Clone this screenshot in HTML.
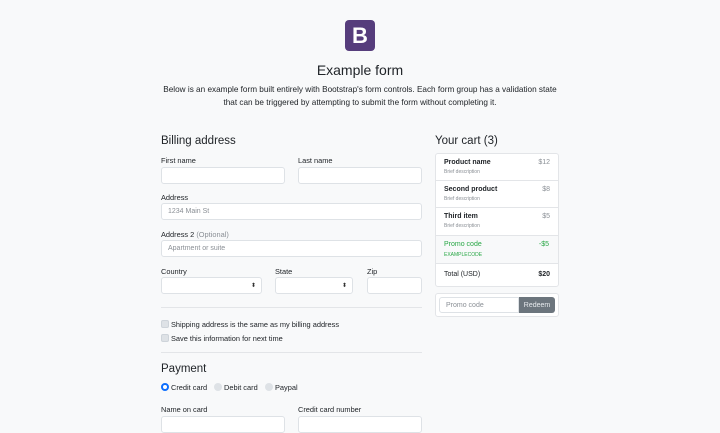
<!DOCTYPE html>
<html><head><style>
*{box-sizing:border-box;margin:0;padding:0}
body{width:720px;height:422px;overflow:hidden;background:#f8f9fa;font-family:"Liberation Sans",Arial,sans-serif;color:#212529;position:relative}
.a{position:absolute}
.lbl{position:absolute;font-size:7.4px;color:#212529;margin-top:2px}
.in{position:absolute;background:#fff;border:1px solid #dee2e6;border-radius:3px;height:17px;font-size:7px;color:#8a8f95;padding:4px 0 0 6px}
.sel::after{content:"⬍";position:absolute;right:5px;top:4px;font-size:6px;color:#333}
.hr{position:absolute;height:1px;background:#e3e5e8;left:161px;width:261px}
.cb{position:absolute;width:8px;height:8px;border-radius:2px;background:#dee2e6;border:1px solid #ced4da}
.rd{position:absolute;width:8px;height:8px;border-radius:50%;background:#dee2e6}
.row{position:absolute;left:435px;width:124px;border-bottom:1px solid #e3e5e8;font-size:7px}
.row b{position:absolute;left:9px;top:5px;font-weight:600;color:#212529}
.row i{position:absolute;left:9px;top:15px;font-style:normal;font-size:5px;color:#8a8f95}
.row s{position:absolute;right:9px;top:5px;text-decoration:none;color:#8a8f95}
.h{position:absolute;font-size:11.5px}
</style></head><body>
<div class="a" style="left:345px;top:20px;width:30px;height:31px;background:#563d7c;border-radius:4px;color:#fff;font-weight:bold;font-size:22px;text-align:center;line-height:31px">B</div>
<div class="a" style="left:0;width:720px;top:62px;text-align:center;font-size:14px">Example form</div>
<div class="a" style="left:160px;width:400px;top:83px;text-align:center;font-size:8.2px;line-height:13px;color:#212529">Below is an example form built entirely with Bootstrap's form controls. Each form group has a validation state that can be triggered by attempting to submit the form without completing it.</div>

<div class="h" style="left:161px;top:135px">Billing address</div>
<div class="lbl" style="left:161px;top:154px">First name</div>
<div class="lbl" style="left:298px;top:154px">Last name</div>
<div class="in" style="left:161px;top:167px;width:124px"></div>
<div class="in" style="left:298px;top:167px;width:124px"></div>
<div class="lbl" style="left:161px;top:191px">Address</div>
<div class="in" style="left:161px;top:203px;width:261px">1234 Main St</div>
<div class="lbl" style="left:161px;top:228px">Address 2 <span style="color:#8a8f95">(Optional)</span></div>
<div class="in" style="left:161px;top:240px;width:261px">Apartment or suite</div>
<div class="lbl" style="left:161px;top:265px">Country</div>
<div class="lbl" style="left:275px;top:265px">State</div>
<div class="lbl" style="left:367px;top:265px">Zip</div>
<div class="in sel" style="left:161px;top:277px;width:101px"></div>
<div class="in sel" style="left:275px;top:277px;width:78px"></div>
<div class="in" style="left:367px;top:277px;width:55px"></div>
<div class="hr" style="top:307px"></div>
<div class="cb" style="left:161px;top:320px"></div>
<div class="lbl" style="left:171px;top:318px">Shipping address is the same as my billing address</div>
<div class="cb" style="left:161px;top:334px"></div>
<div class="lbl" style="left:171px;top:332px">Save this information for next time</div>
<div class="hr" style="top:352px"></div>
<div class="h" style="left:161px;top:363px">Payment</div>
<div class="rd" style="left:161px;top:383px;background:#fff;border:2.5px solid #0d6efd"></div>
<div class="lbl" style="left:171px;top:381px">Credit card</div>
<div class="rd" style="left:214px;top:383px"></div>
<div class="lbl" style="left:224px;top:381px">Debit card</div>
<div class="rd" style="left:265px;top:383px"></div>
<div class="lbl" style="left:275px;top:381px">Paypal</div>
<div class="lbl" style="left:161px;top:403px">Name on card</div>
<div class="lbl" style="left:298px;top:403px">Credit card number</div>
<div class="in" style="left:161px;top:416px;width:124px"></div>
<div class="in" style="left:298px;top:416px;width:124px"></div>

<div class="h" style="left:435px;top:135px">Your cart (3)</div>
<div class="a" style="left:435px;top:153px;width:124px;height:134px;background:#fff;border:1px solid #e3e5e8;border-radius:3px"></div>
<div class="row" style="top:154px;height:27px"><b>Product name</b><i>Brief description</i><s>$12</s></div>
<div class="row" style="top:181px;height:27px"><b>Second product</b><i>Brief description</i><s>$8</s></div>
<div class="row" style="top:208px;height:28px"><b>Third item</b><i>Brief description</i><s>$5</s></div>
<div class="row" style="top:236px;height:28px;background:#f8f9fa;left:436px;width:122px"><b style="color:#28a745;font-weight:normal;left:8px">Promo code</b><i style="color:#28a745;top:16px;left:8px">EXAMPLECODE</i><s style="color:#28a745">-$5</s></div>
<div class="row" style="top:264px;height:23px;border:none"><b style="font-weight:normal;top:7px">Total (USD)</b><s style="color:#212529;font-weight:bold;top:7px">$20</s></div>
<div class="a" style="left:435px;top:293px;width:124px;height:24px;background:#fff;border:1px solid #e3e5e8;border-radius:3px"></div>
<div class="in" style="left:439px;top:297px;width:80px;height:16px;border-radius:3px 0 0 3px">Promo code</div>
<div class="a" style="left:519px;top:297px;width:36px;height:16px;background:#6c757d;color:#e9ecef;font-size:7px;display:flex;align-items:center;justify-content:center;border-radius:0 3px 3px 0">Redeem</div>
</body></html>
